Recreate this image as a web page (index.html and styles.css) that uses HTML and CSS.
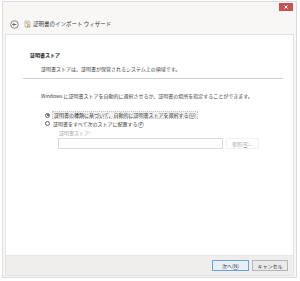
FILE: index.html
```html
<!DOCTYPE html>
<html lang="ja">
<head>
<meta charset="utf-8">
<link rel="stylesheet" href="styles.css">
</head>
<body>
<div class="window">
  <div class="titlebar">
    <div class="close">
      <svg width="14" height="8" viewBox="0 0 14 8"><path d="M5.5 2.5l3 3M8.5 2.5l-3 3" stroke="#fff" stroke-width="1"/></svg>
    </div>
  </div>
  <div class="header">
    <svg class="back" width="9" height="9" viewBox="0 0 9 9"><circle cx="4.5" cy="4.5" r="3.8" fill="none" stroke="#6b6b6b" stroke-width="0.8"/><path d="M6.3 4.5H2.8M4.4 2.9L2.8 4.5l1.6 1.6" fill="none" stroke="#4a4a4a" stroke-width="0.8"/></svg>
    <svg class="cert" width="7" height="8" viewBox="0 0 7 8"><path d="M1 1h4l1 1v5H1z" fill="#f4f4f4" stroke="#8a8a8a" stroke-width="0.5"/><path d="M2 2.5h3M2 3.5h2" stroke="#7a9acb" stroke-width="0.5"/><circle cx="4.3" cy="5" r="1.2" fill="#e2b93b"/><path d="M3.6 6l-0.4 1.6M5 6l0.4 1.6" stroke="#5aa04a" stroke-width="0.6"/></svg>
    <span class="title">証明書のインポート ウィザード</span>
  </div>
  <div class="panel">
    <div class="content">
      <div class="heading">証明書ストア</div>
      <div class="subtitle">証明書ストアは、証明書が保管されるシステム上の領域です。</div>
      <div class="rule"></div>
      <div class="desc">Windows に証明書ストアを自動的に選択させるか、証明書の場所を指定することができます。</div>
      <div class="radio"><span class="dot on"></span><span class="focus">証明書の種類に基づいて、自動的に証明書ストアを選択する(<u>U</u>)</span></div>
      <div class="radio"><span class="dot"></span><span class="plain">証明書をすべて次のストアに配置する(<u>P</u>)</span></div>
      <div class="storelabel">証明書ストア:</div>
      <div class="storerow">
        <div class="input"></div>
        <div class="browse">参照(<u>R</u>)...</div>
      </div>
    </div>
    <div class="footer">
      <div class="btn primary">次へ(<u>N</u>)</div>
      <div class="btn">キャンセル</div>
    </div>
  </div>
</div>
</body>
</html>
```

FILE: styles.css
```css
* { box-sizing: border-box; }
html, body { margin: 0; padding: 0; }
body {
  width: 300px;
  height: 281px;
  background: #ffffff;
  font-family: "Noto Sans CJK JP", "Noto Sans", sans-serif;
  color: #3a3a3a;
  overflow: hidden;
}
.window {
  margin: 1px 0 0 2px;
  width: 295px;
  height: 277px;
  border: 1px solid #dcdcdc;
  background: #f8f7f5;
  display: flex;
  flex-direction: column;
}
.titlebar {
  height: 13px;
  display: flex;
  justify-content: flex-end;
  padding: 1px 3px 0 0;
}
.close {
  width: 14px;
  height: 8px;
  background: #c45353;
  display: flex;
}
.header {
  height: 19px;
  display: flex;
  align-items: center;
  padding: 0 0 1px 7px;
}
.back { margin-right: 5px; }
.cert { margin-right: 2px; }
.title {
  font-size: 5.5px;
  line-height: 8px;
  color: #3a3a3a;
  white-space: nowrap;
}
.panel {
  margin: 0 2px 0 2px;
  flex: 0 0 242px;
  border: 1px solid #e2e2e2;
  display: flex;
  flex-direction: column;
}
.content {
  flex: 1;
  background: #ffffff;
  padding: 16px 0 0 0;
}
.heading {
  font-size: 5px;
  line-height: 8px;
  font-weight: bold;
  color: #222;
  margin-left: 24px;
}
.subtitle {
  font-size: 5px;
  line-height: 8px;
  margin: 6px 0 0 35px;
}
.rule {
  height: 1px;
  background: #cfcfcf;
  margin: 5px 10px 0 17px;
}
.desc {
  font-size: 5px;
  line-height: 8px;
  margin: 13px 0 0 35px;
}
.radio {
  display: flex;
  align-items: center;
  height: 8px;
  font-size: 5px;
  line-height: 7px;
  margin-left: 39px;
}
.desc + .radio { margin-top: 11px; }
.dot {
  width: 5px;
  height: 5px;
  border: 0.6px solid #666;
  border-radius: 50%;
  margin-right: 2px;
  background: #fff;
  position: relative;
}
.dot.on::after {
  content: "";
  position: absolute;
  left: 0.8px;
  top: 0.8px;
  width: 2.2px;
  height: 2.2px;
  border-radius: 50%;
  background: #444;
}
.focus {
  border: 1px dotted #c4c4c4;
  background: #f1f1f1;
  padding: 0 1px;
  line-height: 6px;
}
.plain { padding: 0 1px; }
u {
  text-decoration: underline;
  text-decoration-color: #a0a0a0;
  text-decoration-thickness: 0.5px;
  text-underline-offset: 0.5px;
}
.storelabel {
  font-size: 5px;
  line-height: 8px;
  color: #a6a6a6;
  margin: 2px 0 0 53px;
}
.storerow {
  display: flex;
  margin: 1px 0 0 52px;
  height: 11px;
}
.input {
  width: 165px;
  height: 11px;
  border: 1px solid #dadada;
  background: #fff;
}
.browse {
  width: 33px;
  margin-left: 3px;
  font-size: 5px;
  line-height: 9px;
  color: #a8a8a8;
  border: 1px solid #f2f2f2;
  text-align: center;
}
.footer {
  height: 20px;
  background: #efeeec;
  border-top: 1px solid #e6e6e6;
  display: flex;
  justify-content: flex-end;
  align-items: center;
  gap: 3px;
  padding: 0 5px 0 0;
}
.btn {
  width: 36px;
  height: 11px;
  border: 1px solid #b4b4b4;
  background: #eaeaea;
  font-size: 5px;
  line-height: 9px;
  text-align: center;
}
.btn.primary {
  width: 37px;
  border-color: #6aa3dc;
  background: #e9eff7;
}
```
